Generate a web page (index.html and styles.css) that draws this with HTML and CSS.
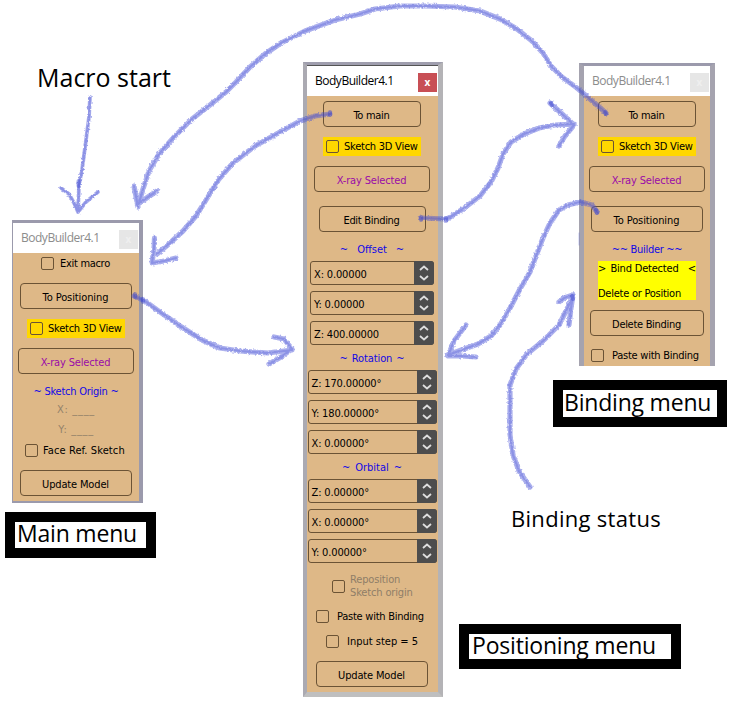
FILE: index.html
```html
<!DOCTYPE html>
<html lang="en">
<head>
<meta charset="utf-8">
<title>BodyBuilder menus</title>
<link rel="stylesheet" href="styles.css">
</head>
<body>
<main class="canvas">
  <p class="note macro-start">Macro start</p>
  <p class="note binding-status">Binding status</p>

  <section class="window main-menu">
    <header class="title inactive"><span>BodyBuilder4.1</span><i class="close">x</i></header>
    <div class="panel">
      <label class="check exit"><i></i><span class="t-exit">Exit macro</span></label>
      <div class="button w112 g13"><span class="t-pos">To Positioning</span></div>
      <label class="check view"><i></i><span class="t-view">Sketch 3D View</span></label>
      <div class="button xray"><span class="t-xray">X-ray Selected</span></div>
      <h3 class="origin">~ Sketch Origin ~</h3>
      <div class="coord">X: ____</div>
      <div class="coord">Y: ____</div>
      <label class="check face"><i></i><span class="t-face">Face Ref. Sketch</span></label>
      <div class="button w112 g13"><span class="t-update">Update Model</span></div>
    </div>
  </section>

  <section class="window positioning-menu">
    <header class="title"><span>BodyBuilder4.1</span><i class="close">x</i></header>
    <div class="panel">
      <div class="button w98 g5"><span class="t-main">To main</span></div>
      <label class="check view"><i></i><span class="t-view">Sketch 3D View</span></label>
      <div class="button xray"><span class="t-xray">X-ray Selected</span></div>
      <div class="button w107 g14"><span class="t-edit">Edit Binding</span></div>
      <h3 class="first"><span>~</span><span>Offset</span><span>~</span></h3>
      <div class="spins offset">
        <div class="spin"><span>X: 0.00000</span><b><svg viewBox="0 0 20 24"><path d="M6 9l4-3.5L14 9M6 15l4 3.5 4-3.5"/></svg></b></div>
        <div class="spin"><span>Y: 0.00000</span><b><svg viewBox="0 0 20 24"><path d="M6 9l4-3.5L14 9M6 15l4 3.5 4-3.5"/></svg></b></div>
        <div class="spin"><span>Z: 400.00000</span><b><svg viewBox="0 0 20 24"><path d="M6 9l4-3.5L14 9M6 15l4 3.5 4-3.5"/></svg></b></div>
      </div>
      <h3 class="rotation"><span>~</span><span>Rotation</span><span>~</span></h3>
      <div class="spins">
        <div class="spin"><span>Z: 170.00000°</span><b><svg viewBox="0 0 20 24"><path d="M6 9l4-3.5L14 9M6 15l4 3.5 4-3.5"/></svg></b></div>
        <div class="spin"><span>Y: 180.00000°</span><b><svg viewBox="0 0 20 24"><path d="M6 9l4-3.5L14 9M6 15l4 3.5 4-3.5"/></svg></b></div>
        <div class="spin"><span>X: 0.00000°</span><b><svg viewBox="0 0 20 24"><path d="M6 9l4-3.5L14 9M6 15l4 3.5 4-3.5"/></svg></b></div>
      </div>
      <h3 class="orbital"><span>~</span><span>Orbital</span><span>~</span></h3>
      <div class="spins">
        <div class="spin"><span>Z: 0.00000°</span><b><svg viewBox="0 0 20 24"><path d="M6 9l4-3.5L14 9M6 15l4 3.5 4-3.5"/></svg></b></div>
        <div class="spin"><span>X: 0.00000°</span><b><svg viewBox="0 0 20 24"><path d="M6 9l4-3.5L14 9M6 15l4 3.5 4-3.5"/></svg></b></div>
        <div class="spin"><span>Y: 0.00000°</span><b><svg viewBox="0 0 20 24"><path d="M6 9l4-3.5L14 9M6 15l4 3.5 4-3.5"/></svg></b></div>
      </div>
      <label class="check reposition"><i></i><span>Reposition<br>Sketch origin</span></label>
      <label class="check paste"><i></i><span class="t-paste">Paste with Binding</span></label>
      <label class="check step"><i></i><span class="t-step">Input step = 5</span></label>
      <div class="button w112 g13"><span class="t-update">Update Model</span></div>
    </div>
  </section>

  <section class="window binding-menu">
    <header class="title inactive"><span>BodyBuilder4.1</span><i class="close">x</i></header>
    <div class="panel">
      <div class="button w98 g5"><span class="t-main">To main</span></div>
      <label class="check view"><i></i><span class="t-view">Sketch 3D View</span></label>
      <div class="button xray"><span class="t-xray">X-ray Selected</span></div>
      <div class="button w112 g14"><span class="t-pos">To Positioning</span></div>
      <h3 class="first builder">~~ Builder ~~</h3>
      <div class="status">
        <div class="bind"><span>&gt;</span><span class="t-bind">Bind Detected</span><span>&lt;</span></div>
        <div class="t-delpos">Delete or Position</div>
      </div>
      <div class="button w114 g10"><span class="t-del">Delete Binding</span></div>
      <label class="check paste"><i></i><span class="t-paste">Paste with Binding</span></label>
    </div>
  </section>

  <div class="caption cap-main"><span>Main menu</span></div>
  <div class="caption cap-binding"><span>Binding menu</span></div>
  <div class="caption cap-positioning"><span>Positioning menu</span></div>

  <svg class="arrows" viewBox="0 0 732 702">
    <defs>
      <filter id="chalk" filterUnits="userSpaceOnUse" x="0" y="0" width="732" height="702">
        <feTurbulence type="fractalNoise" baseFrequency="0.45" numOctaves="2" seed="4" result="n"/>
        <feDisplacementMap in="SourceGraphic" in2="n" scale="3" xChannelSelector="R" yChannelSelector="G"/>
      </filter>
      <path id="start" d="M90 97L89 117 86 140 82 170 79 185 78 212M61 188L69 194 74 203 78 212 86 202 98 192"/>
      <g id="links">
        <path d="M606 113L590 99 577 88 562 77 551 66 543 53 532 41 517 29 500 19 480 11 455 7 425 6 400 6 375 9 360 14 335 20 305 31 281 43 265 54 250 67 236 82 226 92 210 105 192 119 175 136 159 154 149 171 143 189 139 203M134 186L138 207M157 191L148 197 138 204"/>
        <path d="M330 114L315 116 300 121 280 132 255 146 233 163 219 179 206 200 196 216 183 231 170 243 157 254M154.500 238L154 249 152 263 164 261 176 258"/>
        <path d="M134 296L145 301 160 312 180 326 202 340 220 348 240 351 268 353 292 350M274 337L284 339 292 349 281 357 269 364"/>
        <path d="M421 218L447 219 463 209 480 196 491 182 498 168 503 154 511 142 524 134 539 128 555 125 574 124M550 103L561 113 574 125 565 136 559 146"/>
        <path d="M597 212L592 205 580 202 568 205 559 210 550 223 543 238 536 256 530 272 520 289 509 310 500 325 491 336 478 344 464 349 448 355M466 325L454 341 448 356 461 356 476 357"/>
        <path d="M530 487L519 471 513 455 510 435 510 409 510 385 516 369 527 354 543 341 559 325 566 311 573 296M559 302L564 298 573 295 571 308 569 325"/>
      </g>
    </defs>
    <g filter="url(#chalk)">
      <use href="#start" class="wide thin"/>
      <use href="#links" class="wide"/>
    </g>
    <g filter="url(#chalk)">
      <use href="#start" class="core"/>
      <use href="#links" class="core"/>
    </g>
    <path class="dots" d="M78.500 181v5M135 294v3M143 299v3M330 112v3M421 217v3M446 218v3M551 103l1 2M605 112l1 2M596 210l1 3M572 296l1 3"/>
    <path class="stray" d="M579 233v12"/>
  </svg>
</main>
</body>
</html>
```
FILE: styles.css
```css
* { box-sizing: border-box; }
body { margin: 0; background: #fff; }
p, h3 { margin: 0; font-weight: normal; }
i { font-style: normal; }

.canvas {
  position: relative;
  width: 732px;
  height: 702px;
  overflow: hidden;
  background: #fff;
  color: #000;
  font: 11px/13px "DejaVu Sans Condensed", "DejaVu Sans", sans-serif;
  font-stretch: condensed;
  white-space: nowrap;
}

/* free-standing notes and captions */
.note, .caption { position: absolute; font: 23px/30px "Open Sans", "Noto Sans", sans-serif; }
.macro-start { left: 37px; top: 62px; font-size: 25px; }
.binding-status { left: 511px; top: 503px; font-size: 22px; letter-spacing: .3px; }
.caption { border: 10px solid #000; background: #fff; line-height: 23px; letter-spacing: -.2px; }
.cap-main { left: 5px; top: 512px; width: 151px; height: 46px; padding-left: 2px; }
.cap-binding { left: 553px; top: 380px; width: 174px; height: 47px; padding-left: 1px; line-height: 24px; }
.cap-positioning { left: 459px; top: 624px; width: 222px; height: 45px; padding-left: 3px; }

/* windows */
.window { position: absolute; display: flex; flex-direction: column; border: solid #9b9aac; }
.main-menu { left: 12px; top: 220px; width: 131px; height: 283px; border-width: 3px 4px 2px 1px; }
.positioning-menu { left: 303px; top: 62px; width: 140px; height: 635px; border-width: 3px 5px 5px 4px; border-color: #9f9eae #b4b3b6 #bfbfbf #abaab2; }
.binding-menu { left: 579px; top: 63px; width: 136px; height: 303px; border-width: 3px 5px 0; border-color: #9b9aac #a5a3af; }

.title {
  flex: none;
  display: flex;
  justify-content: space-between;
  height: 30px;
  padding: 0 1px 0 8px;
  background: #fff;
  font: 12px/29px "Open Sans", "Noto Sans", sans-serif;
  letter-spacing: -.48px;
}
.positioning-menu .title { height: 31px; border-top: 1px solid #555; }
.title.inactive { color: #8c8c8c; }
.close {
  width: 19px;
  height: 19px;
  margin-top: 7px;
  background: #c84f55;
  color: #fff;
  font: bold 10px/18px "Open Sans", sans-serif;
  letter-spacing: 0;
  text-align: center;
}
.inactive .close { background: #e6e6e6; color: #efefef; }

.panel { flex: 1; display: flex; flex-direction: column; align-items: center; background: #deb887; }
.positioning-menu .panel { padding-right: 1px; }

.button {
  flex: none;
  display: flex;
  justify-content: center;
  align-items: center;
  height: 26px;
  border: 1px solid #6b5335;
  border-radius: 4px;
  padding: 2px 1px 0 0;
}
.w98 { width: 98px; }
.w107 { width: 107px; }
.w112 { width: 112px; }
.w114 { width: 114px; }
.g5 { margin-top: 5px; }
.g10 { margin-top: 10px; }
.g13 { margin-top: 13px; }
.g14 { margin-top: 14px; }
.xray { width: 116px; margin-top: 10px; color: #9a0ba8; }

/* per-label tracking */
.t-view { letter-spacing: -.24px; }
.t-xray, .t-update { letter-spacing: -.15px; }
.t-main, .t-edit, .t-del, .t-exit { letter-spacing: -.3px; }
.t-pos { letter-spacing: -.1px; }
.t-paste, .t-delpos { letter-spacing: -.25px; }
.t-face { letter-spacing: .1px; }

.check { flex: none; display: flex; align-items: center; height: 13px; }
.check i { flex: none; width: 13px; height: 13px; border: 1px solid #6b5335; border-radius: 2px; }
.view { width: 98px; height: 19px; margin-top: 10px; padding-left: 3px; gap: 5px; background: #ffd700; }
.exit { width: 70px; margin-top: 4px; gap: 6px; }
.face { width: 102px; margin-top: 4px; gap: 5px; }
.reposition { width: 80px; height: 26px; margin-top: 10px; gap: 5px; color: #8f7e68; letter-spacing: -.15px; }
.paste { width: 112px; margin-top: 11px; gap: 8px; }
.binding-menu .paste { margin-top: 13px; }
.step { width: 92px; margin-top: 12px; gap: 8px; }

h3 { flex: none; display: flex; justify-content: center; align-items: center; height: 25px; font-size: 11px; color: #1208e6; }
.first { height: 29px; padding-top: 5px; gap: 9px; }
.builder { letter-spacing: -.3px; }
.rotation { padding-top: 2px; gap: 4px; letter-spacing: -.1px; }
.orbital { padding-top: 2px; gap: 5px; }
.origin { height: 26px; padding-top: 8px; letter-spacing: -.25px; }
.coord { height: 20px; line-height: 20px; color: #94826a; letter-spacing: .7px; }

.spins { display: flex; flex-direction: column; gap: 6px; width: 129px; }
.spins.offset { width: 124px; }
.spin { display: flex; justify-content: space-between; height: 24px; border: 1px solid #6b5335; border-radius: 3px; padding-left: 3px; line-height: 25px; letter-spacing: -.15px; }
.spin b { width: 20px; height: 24px; margin: -1px; background: #4d4d4d; border-radius: 0 3px 3px 0; }
.spin svg { display: block; width: 20px; height: 24px; fill: none; stroke: #dedede; stroke-width: 1.800; }

.status { width: 98px; height: 39px; background: #ff0; display: flex; flex-direction: column; justify-content: space-between; }
.bind { display: flex; justify-content: space-between; padding-top: 1px; }
.t-bind { letter-spacing: -.2px; margin-right: 5px; }

/* hand-drawn arrows */
.arrows { position: absolute; inset: 0; width: 732px; height: 702px; fill: none; stroke-linecap: round; stroke-linejoin: round; }
.wide { stroke: rgba(70, 80, 215, .45); stroke-width: 5.200; }
.wide.thin { stroke-width: 3.800; }
.core { stroke: rgba(60, 70, 210, .28); stroke-width: 2.200; }
.dots { stroke: rgba(50, 60, 205, .4); stroke-width: 4; }
.stray { stroke: rgba(70, 80, 215, .3); stroke-width: 1; }
```
